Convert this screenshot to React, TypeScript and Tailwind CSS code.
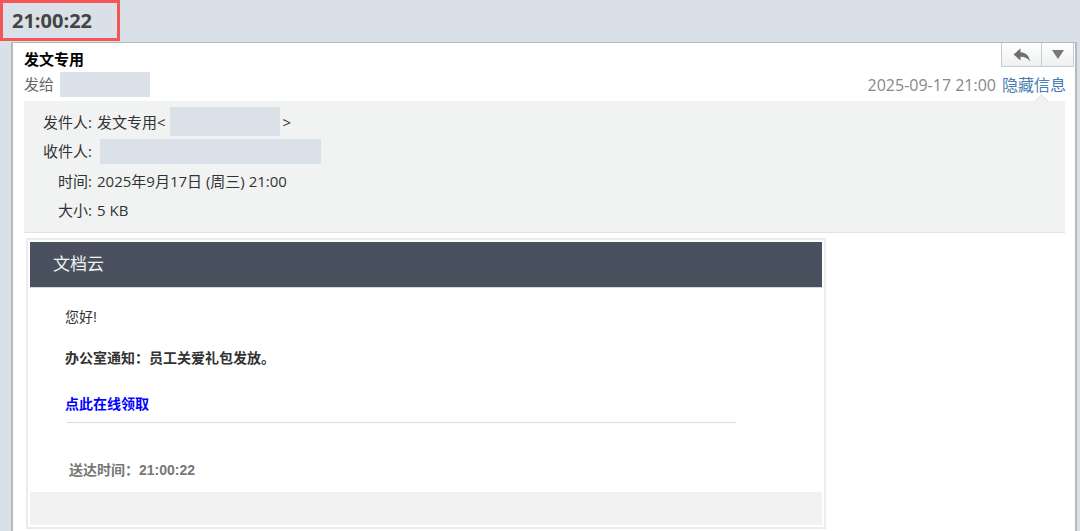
import { useState } from "react";

const sans = { fontFamily: '"Open Sans", "Noto Sans CJK SC", sans-serif' };
const body = { fontFamily: '"Liberation Sans", "Noto Sans CJK SC", sans-serif' };

function InfoRow({ label, children }: { label: string; children: React.ReactNode }) {
  return (
    <div className="flex items-center h-[29.5px]">
      <span className="w-[68px] text-right shrink-0">{label}</span>
      <span className="ml-[5px] flex items-center">{children}</span>
    </div>
  );
}

export default function App() {
  const [showInfo, setShowInfo] = useState(true);

  return (
    <div className="w-[1080px] h-[531px] overflow-hidden bg-[#dae0e7] flex flex-col" style={sans}>
      {/* top strip with the time */}
      <div className="h-[42px] shrink-0 flex items-start">
        <div className="w-[120px] h-[41px] border-[3px] border-[#f25656] flex items-center pl-[9px] text-[20px] font-bold text-[#444]">
          21:00:22
        </div>
      </div>

      <div className="flex-1 ml-[11px] w-[1066px] bg-white border-l-2 border-r-2 border-t border-[#b3bac1] flex flex-col">
        <div className="flex justify-between">
          <div className="pl-[11px] pt-[5px]">
            <div className="text-[15px] font-bold text-black leading-[22px]">发文专用</div>
            <div className="flex items-center text-[15px] text-[#666] leading-[26px] mt-[1px]">
              发给
              <span className="ml-[6px] w-[90px] h-[25px] bg-[#dbe1e8]" />
            </div>
          </div>
          <div className="flex flex-col items-end">
            <div className="flex h-[24px] mr-[1px] border border-t-0 border-[#c7ccd1] bg-gradient-to-b from-white to-[#eef0f2]">
              <div className="w-[40px] flex items-center justify-center border-r border-[#c7ccd1]">
                <svg width="18" height="14" viewBox="0 0 18 14">
                  <path d="M7.5 0.5 L0.5 6.5 L7.5 12.5 L7.5 8.8 C11.5 8.6 14.5 10 17 13.5 C16.2 7.8 12.8 4.6 7.5 4.3 Z" fill="#6f6f6f" />
                </svg>
              </div>
              <div className="w-[31px] flex items-center justify-center">
                <svg width="12" height="9" viewBox="0 0 12 9">
                  <path d="M0 0 L12 0 L6 9 Z" fill="#777" />
                </svg>
              </div>
            </div>
            <div className="flex items-center mt-[5px] text-[16px] leading-[26px] pr-[9px]">
              <span className="text-[#888]">2025-09-17 21:00</span>
              <button onClick={() => setShowInfo(!showInfo)} className="ml-[6px] text-[#4a7db3]">
                {showInfo ? "隐藏信息" : "显示信息"}
              </button>
            </div>
          </div>
        </div>

        {showInfo && (
          <div className="relative ml-[11px] mr-[10px] mt-[3px] h-[132px] bg-[#f1f3f2] border-b border-[#dfe3e1] pt-[6px] text-[15px] text-[#333]">
            <div className="absolute -top-[5px] right-[19px] w-[9px] h-[9px] rotate-45 bg-[#f1f3f2] border-l border-t border-[#e2e6e4]" />
            <InfoRow label="发件人:">
              发文专用&lt;
              <span className="ml-[4px] w-[110px] h-[29px] bg-[#dbe1e8]" />
              <span className="ml-[3px]">&gt;</span>
            </InfoRow>
            <InfoRow label="收件人:">
              <span className="w-[221px] h-[25px] bg-[#dbe1e8] ml-[3px]" />
            </InfoRow>
            <InfoRow label="时间:">2025年9月17日 (周三) 21:00</InfoRow>
            <InfoRow label="大小:">5 KB</InfoRow>
          </div>
        )}

        {/* mail body */}
        <div className="ml-[13px] mt-[5px] w-[800px] border-2 border-[#ececec] p-[2px]" style={body}>
          <div className="h-[46px] bg-[#4a515e] border-b border-[#d6dae1] flex items-center pl-[23px] text-[17px] text-[#f2f2f2]">
            文档云
          </div>
          <div className="pl-[35px] pt-[19px] text-[#333]">
            <div className="text-[14px] leading-[20px]">您好!</div>
            <div className="mt-[21px] text-[14px] font-bold leading-[20px]">办公室通知：员工关爱礼包发放。</div>
            <div className="mt-[26px] text-[14px] font-bold leading-[20px] text-[#0000ff]">点此在线领取</div>
            <div className="mt-[8px] ml-[2px] w-[669px] h-px bg-[#dcdcdc]" />
            <div className="mt-[37px] ml-[4px] text-[14px] font-bold leading-[20px] text-[#777]">送达时间：21:00:22</div>
          </div>
          <div className="mt-[12px] h-[33px] bg-[#f2f2f2]" />
        </div>
      </div>
    </div>
  );
}
